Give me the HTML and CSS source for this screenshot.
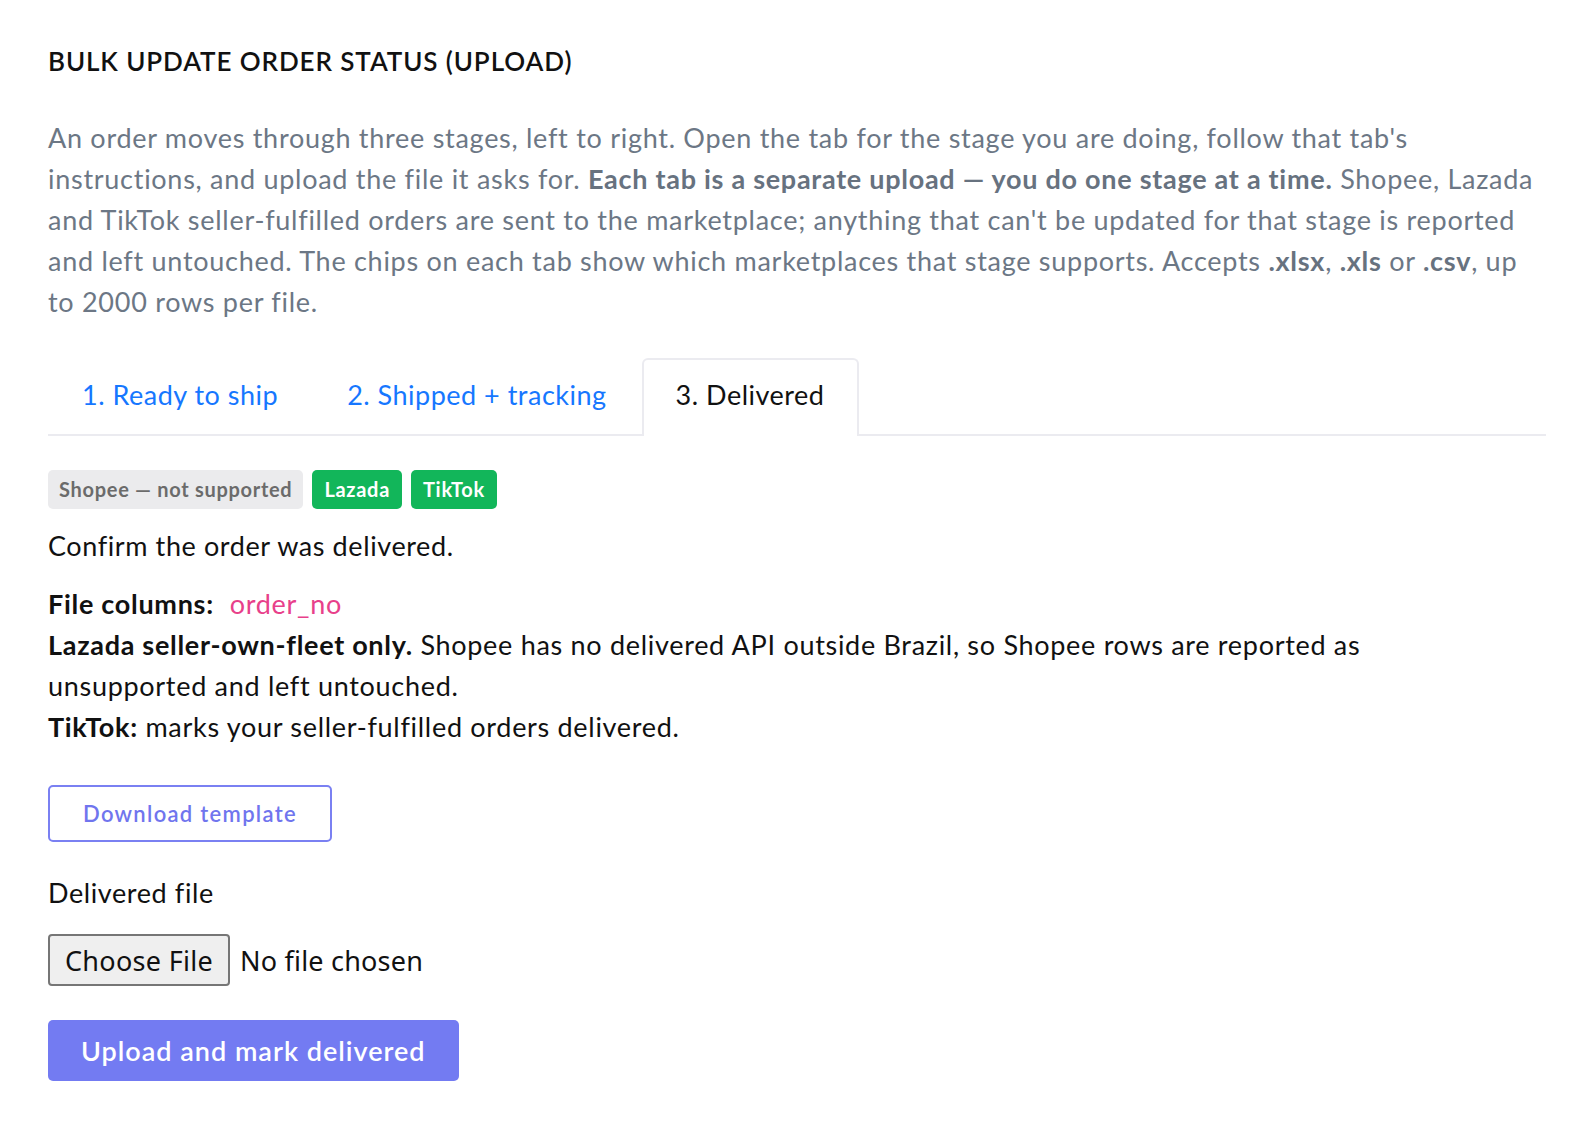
FILE: index.html
```html
<!DOCTYPE html>
<html lang="en">
<head>
<meta charset="utf-8">
<title>Bulk update order status</title>
<link rel="stylesheet" href="styles.css">
</head>
<body>
<main class="page">
  <h1 class="title">BULK UPDATE ORDER STATUS (UPLOAD)</h1>
  <p class="intro">An order moves through three stages, left to right. Open the tab for the stage you are doing, follow that tab's instructions, and upload the file it asks for. <strong>Each tab is a separate upload — you do one stage at a time.</strong> Shopee, Lazada and TikTok seller-fulfilled orders are sent to the marketplace; anything that can't be updated for that stage is reported and left untouched. The chips on each tab show which marketplaces that stage supports. Accepts <strong>.xlsx</strong>, <strong>.xls</strong> or <strong>.csv</strong>, up to 2000 rows per file.</p>

  <nav class="tabs">
    <a class="tab" href="#">1. Ready to ship</a>
    <a class="tab" href="#">2. Shipped + tracking</a>
    <a class="tab active" href="#">3. Delivered</a>
  </nav>

  <section class="pane">
    <div class="chips">
      <span class="chip off">Shopee — not supported</span>
      <span class="chip on">Lazada</span>
      <span class="chip on">TikTok</span>
    </div>
    <p class="lead">Confirm the order was delivered.</p>
    <p class="notes"><strong>File columns:</strong><code class="col">order_no</code><br>
    <strong>Lazada seller-own-fleet only.</strong> Shopee has no delivered API outside Brazil, so Shopee rows are reported as unsupported and left untouched.<br>
    <strong>TikTok:</strong> marks your seller-fulfilled orders delivered.</p>

    <button class="btn-outline" type="button">Download template</button>

    <label class="field-label" for="file">Delivered file</label>
    <input class="file" id="file" type="file">

    <button class="btn-primary" type="button">Upload and mark delivered</button>
  </section>
</main>
</body>
</html>
```
FILE: styles.css
```css
* { box-sizing: border-box; }
html, body { margin: 0; background: #ffffff; }
body {
  font-family: Lato, "Noto Sans", sans-serif;
  color: #111;
  font-size: 27px;
  line-height: 41px;
  letter-spacing: 0.6px;
}
.page {
  padding: 43px 48px 40px 48px;
  display: flex;
  flex-direction: column;
  align-items: flex-start;
}
.title {
  margin: 0;
  font-size: 26px;
  line-height: 36px;
  font-weight: 600;
  letter-spacing: 0.9px;
  color: #111;
}
.intro {
  margin: 38px 0 0;
  color: #6c7785;
  letter-spacing: 0.72px;
}
.intro strong { color: #67727f; font-weight: 700; }
.tabs {
  align-self: stretch;
  display: flex;
  margin-top: 36px;
  border-bottom: 2px solid #ebebf0;
}
.tab {
  display: block;
  padding: 16px 33px 20px 32px;
  line-height: 38px;
  letter-spacing: 0.5px;
  color: #1677ff;
  text-decoration: none;
  border: 2px solid transparent;
  border-bottom: 0;
  border-radius: 6px 6px 0 0;
  margin-bottom: -2px;
}
.tab.active {
  color: #111;
  background: #fff;
  border-color: #ebebf0;
  padding-bottom: 22px;
}
.pane {
  display: flex;
  flex-direction: column;
  align-items: flex-start;
}
.chips {
  display: flex;
  gap: 9px;
  margin-top: 34px;
}
.chip {
  font-size: 20px;
  line-height: 39px;
  height: 39px;
  padding: 0 11px;
  border-radius: 5px;
  font-weight: 700;
  letter-spacing: 0.7px;
}
.chip.off { background: #ebebed; color: #6b6b6b; }
.chip.on { background: #12b65a; color: #fff; padding: 0 12px; }
.lead { margin: 16px 0 0; }
.notes { margin: 17px 0 0; max-width: 1460px; letter-spacing: 0.7px; }
.notes strong { font-weight: 700; }
.col {
  font-family: inherit;
  color: #e8408a;
  margin-left: 16px;
  font-size: inherit;
}
.btn-outline {
  margin-top: 38px;
  font-family: inherit;
  font-size: 22px;
  font-weight: 600;
  letter-spacing: 1.3px;
  color: #7075ee;
  background: #fff;
  border: 2px solid #7a80f2;
  border-radius: 5px;
  height: 57px;
  padding: 0 33px;
  cursor: pointer;
}
.field-label {
  margin-top: 30px;
  display: block;
}
.file {
  margin-top: 21px;
  font-family: "Noto Sans", sans-serif;
  font-size: 27px;
  letter-spacing: 0.2px;
}
.file::file-selector-button {
  font-family: inherit;
  font-size: 27px;
  letter-spacing: 0.3px;
  height: 52px;
  padding: 0 15px;
  margin-right: 10px;
  background: #efefef;
  border: 2px solid #767676;
  border-radius: 4px;
  color: #111;
}
.btn-primary {
  margin-top: 34px;
  font-family: inherit;
  font-size: 27px;
  font-weight: 600;
  letter-spacing: 1px;
  color: #fff;
  background: #737bf2;
  border: 0;
  border-radius: 5px;
  height: 61px;
  padding: 0 33px;
  cursor: pointer;
}
```
